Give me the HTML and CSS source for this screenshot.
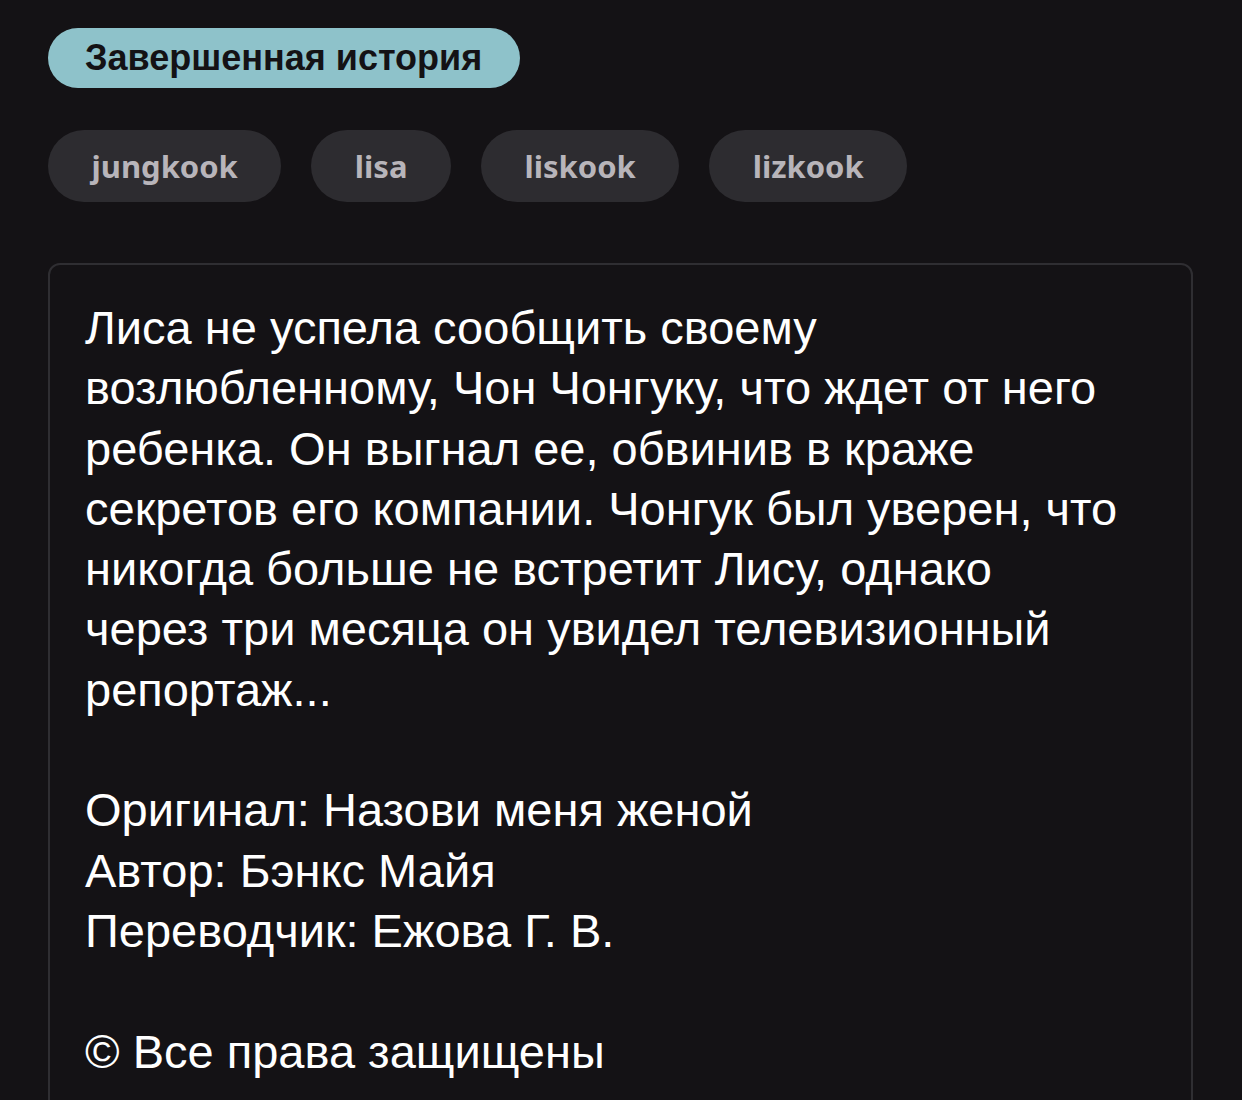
FILE: index.html
```html
<!DOCTYPE html>
<html lang="ru">
<head>
<meta charset="utf-8">
<link rel="stylesheet" href="styles.css">
</head>
<body>
<main class="page">
  <div class="status">Завершенная история</div>
  <ul class="tags">
    <li class="tag">jungkook</li>
    <li class="tag">lisa</li>
    <li class="tag">liskook</li>
    <li class="tag">lizkook</li>
  </ul>
  <section class="card">
    <p class="para">Лиса не успела сообщить своему возлюбленному, Чон Чонгуку, что ждет от него ребенка. Он выгнал ее, обвинив в краже секретов его компании. Чонгук был уверен, что никогда больше не встретит Лису, однако через три месяца он увидел телевизионный репортаж...</p>
    <p class="para">Оригинал: Назови меня женой<br>Автор: Бэнкс Майя<br>Переводчик: Ежова Г. В.</p>
    <p class="para">© Все права защищены</p>
  </section>
</main>
</body>
</html>
```
FILE: styles.css
```css
html, body {
  margin: 0;
  padding: 0;
  background: #141215;
  height: 1100px;
  overflow: hidden;
}
.page {
  padding: 28px 49px 0 48px;
  font-family: "Liberation Sans", Arial, sans-serif;
}
.status {
  display: inline-flex;
  align-items: center;
  height: 60px;
  padding: 0 38px 0 37px;
  border-radius: 30px;
  background: #8ec2ca;
  color: #141215;
  font-weight: 700;
  font-size: 36px;
}
.tags {
  list-style: none;
  margin: 42px 0 0;
  padding: 0;
  display: flex;
  gap: 30px;
}
.tag {
  height: 72px;
  display: flex;
  align-items: center;
  padding: 0 43.5px;
  border-radius: 36px;
  background: #2d2c30;
  color: #b8b5ba;
  font-family: "Noto Sans", "Open Sans", sans-serif;
  font-weight: 700;
  font-size: 31px;
}
.card {
  margin-top: 61px;
  border: 2px solid #2f2e32;
  border-radius: 12px;
  padding: 33px 68px 0 35px;
  height: 900px;
  color: #ffffff;
  font-size: 47px;
  line-height: 60.3px;
}
.para {
  margin: 0 0 60.3px;
}
```
